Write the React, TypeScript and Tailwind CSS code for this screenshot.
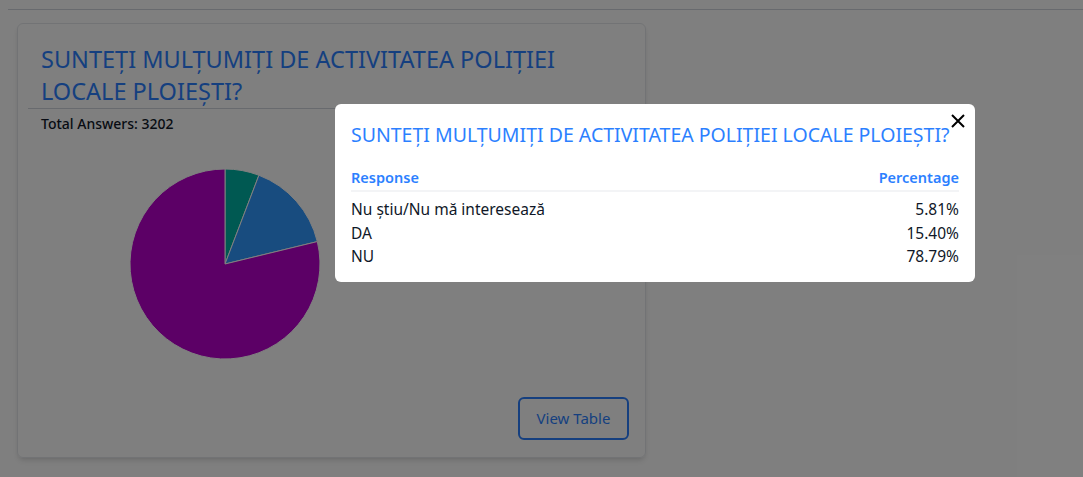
import React from "react";

const answers = [
  { label: "Nu știu/Nu mă interesează", pct: 5.81, color: "#00b3a4" },
  { label: "DA", pct: 15.4, color: "#3199ff" },
  { label: "NU", pct: 78.79, color: "#b900cc" },
];

function Pie() {
  const r = 95;
  let start = 0;
  return (
    <svg width="192" height="192" viewBox="-1 -1 192 192">
      {answers.map((a) => {
        const end = start + (a.pct / 100) * Math.PI * 2;
        const x1 = r + r * Math.sin(start);
        const y1 = r - r * Math.cos(start);
        const x2 = r + r * Math.sin(end);
        const y2 = r - r * Math.cos(end);
        const large = end - start > Math.PI ? 1 : 0;
        start = end;
        return (
          <path
            key={a.label}
            d={`M${r} ${r} L${x1} ${y1} A${r} ${r} 0 ${large} 1 ${x2} ${y2} Z`}
            fill={a.color}
            stroke="#ffffff"
            strokeWidth="1"
          />
        );
      })}
    </svg>
  );
}

export default function App() {
  return (
    <div className="relative w-full h-[477px] overflow-hidden bg-white font-['Noto_Sans','Open_Sans',sans-serif] text-gray-900">
      <div className="h-[10px] ml-2 border-b border-gray-300"></div>

      <div className="ml-[17px] mt-[13px] w-[629px] h-[435px] rounded-md border border-gray-200 shadow-md p-[10px] flex flex-col">
        <h2 className="pl-[13px] pt-[9px] pb-[1px] text-[23.5px] leading-[32px] text-blue-500 border-b border-gray-300">
          SUNTEȚI MULȚUMIȚI DE ACTIVITATEA POLIȚIEI LOCALE PLOIEȘTI?
        </h2>
        <p className="pl-[13px] mt-[5px] text-[14px] leading-[20px] font-medium">Total Answers: 3202</p>
        <div className="pl-[101px] mt-[34px]">
          <Pie />
        </div>
        <div className="flex-1"></div>
        <div className="flex justify-end pr-[6px] pb-[7px]">
          <button className="w-[111px] h-[43px] rounded-md border-2 border-blue-500 text-blue-500 text-[15px]">
            View Table
          </button>
        </div>
      </div>

      <div className="absolute inset-0 bg-black/50"></div>

      <div className="absolute left-[335px] top-[104px] w-[640px] h-[178px] rounded-md bg-white px-4 pt-[16px]">
        <button className="absolute right-[8px] top-[8px] text-black">
          <svg width="18" height="18" viewBox="0 0 18 18" fill="none" stroke="currentColor" strokeWidth="2">
            <path d="M3 3L15 15M15 3L3 15" />
          </svg>
        </button>
        <h3 className="text-[19.5px] leading-[30px] text-blue-500 whitespace-nowrap">
          SUNTEȚI MULȚUMIȚI DE ACTIVITATEA POLIȚIEI LOCALE PLOIEȘTI?
        </h3>
        <table className="w-full mt-[15px] text-[15.5px]">
          <thead>
            <tr className="border-b-2 border-gray-100 text-blue-500 text-[14.5px]">
              <th className="text-left font-semibold pb-[1px] leading-[24px]">Response</th>
              <th className="text-right font-semibold pb-[1px] leading-[24px]">Percentage</th>
            </tr>
          </thead>
          <tbody>
            {answers.map((a, i) => (
              <tr key={a.label}>
                <td className={`leading-[23.5px] ${i === 0 ? "pt-[6px]" : ""}`}>{a.label}</td>
                <td className={`text-right leading-[23.5px] ${i === 0 ? "pt-[6px]" : ""}`}>
                  {a.pct.toFixed(2)}%
                </td>
              </tr>
            ))}
          </tbody>
        </table>
      </div>
    </div>
  );
}
